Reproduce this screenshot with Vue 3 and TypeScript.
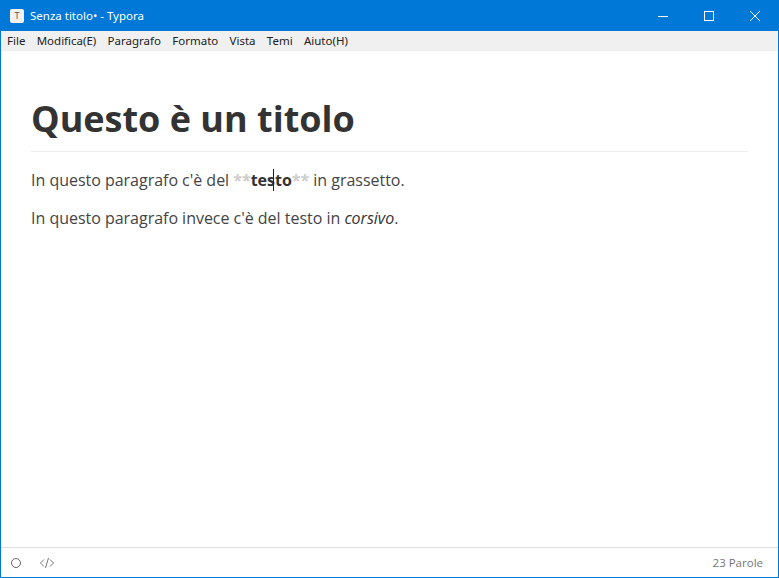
<script setup lang="ts">
const menus: string[] = ['File', 'Modifica(E)', 'Paragrafo', 'Formato', 'Vista', 'Temi', 'Aiuto(H)']
</script>

<template>
  <div class="window">
    <header class="titlebar">
      <div class="app-icon">T</div>
      <span class="title">Senza titolo• - Typora</span>
      <div class="controls">
        <button class="ctl">
          <svg width="12" height="12" viewBox="0 0 12 12"><path d="M1 6.5h10" stroke="#fff" fill="none" /></svg>
        </button>
        <button class="ctl">
          <svg width="12" height="12" viewBox="0 0 12 12"><rect x="1.5" y="1.5" width="9" height="9" stroke="#fff" fill="none" /></svg>
        </button>
        <button class="ctl">
          <svg width="12" height="12" viewBox="0 0 12 12"><path d="M1 1l10 10M11 1L1 11" stroke="#fff" fill="none" /></svg>
        </button>
      </div>
    </header>

    <nav class="menubar">
      <span v-for="m in menus" :key="m" class="menu-item">{{ m }}</span>
    </nav>

    <main class="content">
      <h1>Questo è un titolo</h1>
      <p>In questo paragrafo c'è del <span class="md">**</span><strong>tes<span class="caret"></span>to</strong><span class="md">**</span> in grassetto.</p>
      <p>In questo paragrafo invece c'è del testo in <em>corsivo</em>.</p>
    </main>

    <footer class="statusbar">
      <div class="status-left">
        <svg width="12" height="12" viewBox="0 0 12 12"><circle cx="6" cy="6" r="4.5" stroke="#666" fill="none" /></svg>
        <svg width="16" height="12" viewBox="0 0 16 12"><path d="M5 2.5L1.5 6 5 9.5M11 2.5L14.5 6 11 9.5M9.5 1L6.5 11" stroke="#777" fill="none" /></svg>
      </div>
      <span class="words">23 Parole</span>
    </footer>
  </div>
</template>

<style>
html, body {
  margin: 0;
  background: #fff;
}
</style>

<style scoped>
.window {
  width: 779px;
  height: 578px;
  box-sizing: border-box;
  display: flex;
  flex-direction: column;
  border: 1px solid #0078d7;
  border-top: 0;
  background: #fff;
  overflow: hidden;
  font-family: "Open Sans", "Liberation Sans", sans-serif;
}

.titlebar {
  height: 31px;
  flex: none;
  display: flex;
  align-items: center;
  background: #0078d7;
  color: #fff;
  padding-left: 9px;
  font-family: "Noto Sans", "Open Sans", sans-serif;
  font-size: 11.5px;
}

.app-icon {
  width: 14px;
  height: 14px;
  background: #f5f1ec;
  border-radius: 2px;
  color: #555;
  font-size: 9px;
  line-height: 14px;
  text-align: center;
  margin-right: 6px;
}

.controls {
  margin-left: auto;
  display: flex;
}

.ctl {
  width: 46px;
  height: 31px;
  padding: 0;
  border: 0;
  background: transparent;
  display: flex;
  align-items: center;
  justify-content: center;
}

.menubar {
  height: 20px;
  flex: none;
  display: flex;
  align-items: center;
  gap: 11.3px;
  padding: 0 0 2px 6px;
  box-sizing: border-box;
  background: #f0f0f0;
  color: #222;
  font-family: "Noto Sans", "Open Sans", sans-serif;
  font-size: 11.5px;
}

.content {
  flex: 1;
  padding: 0 30px;
  color: #333;
}

h1 {
  margin: 43px 0 0;
  padding-bottom: 8px;
  border-bottom: 1px solid #eee;
  font-size: 36px;
  line-height: 49px;
  font-weight: 700;
}

p {
  margin: 17px 0 0;
  font-size: 16px;
  line-height: 22px;
  letter-spacing: -0.02px;
  color: #444;
}

p + p {
  margin-top: 16px;
}

strong,
em {
  color: #333;
}

.md {
  color: #ccc;
  font-weight: 700;
}

.caret {
  display: inline-block;
  width: 1px;
  height: 22px;
  margin: 0 1px 0 -2px;
  vertical-align: -5px;
  background: #222;
}

.statusbar {
  height: 30px;
  flex: none;
  display: flex;
  align-items: center;
  justify-content: space-between;
  box-sizing: border-box;
  border-top: 1px solid #ddd;
  padding: 0 15px 0 9px;
  color: #777;
  font-size: 11.5px;
}

.status-left {
  display: flex;
  align-items: center;
  gap: 17px;
}
</style>
